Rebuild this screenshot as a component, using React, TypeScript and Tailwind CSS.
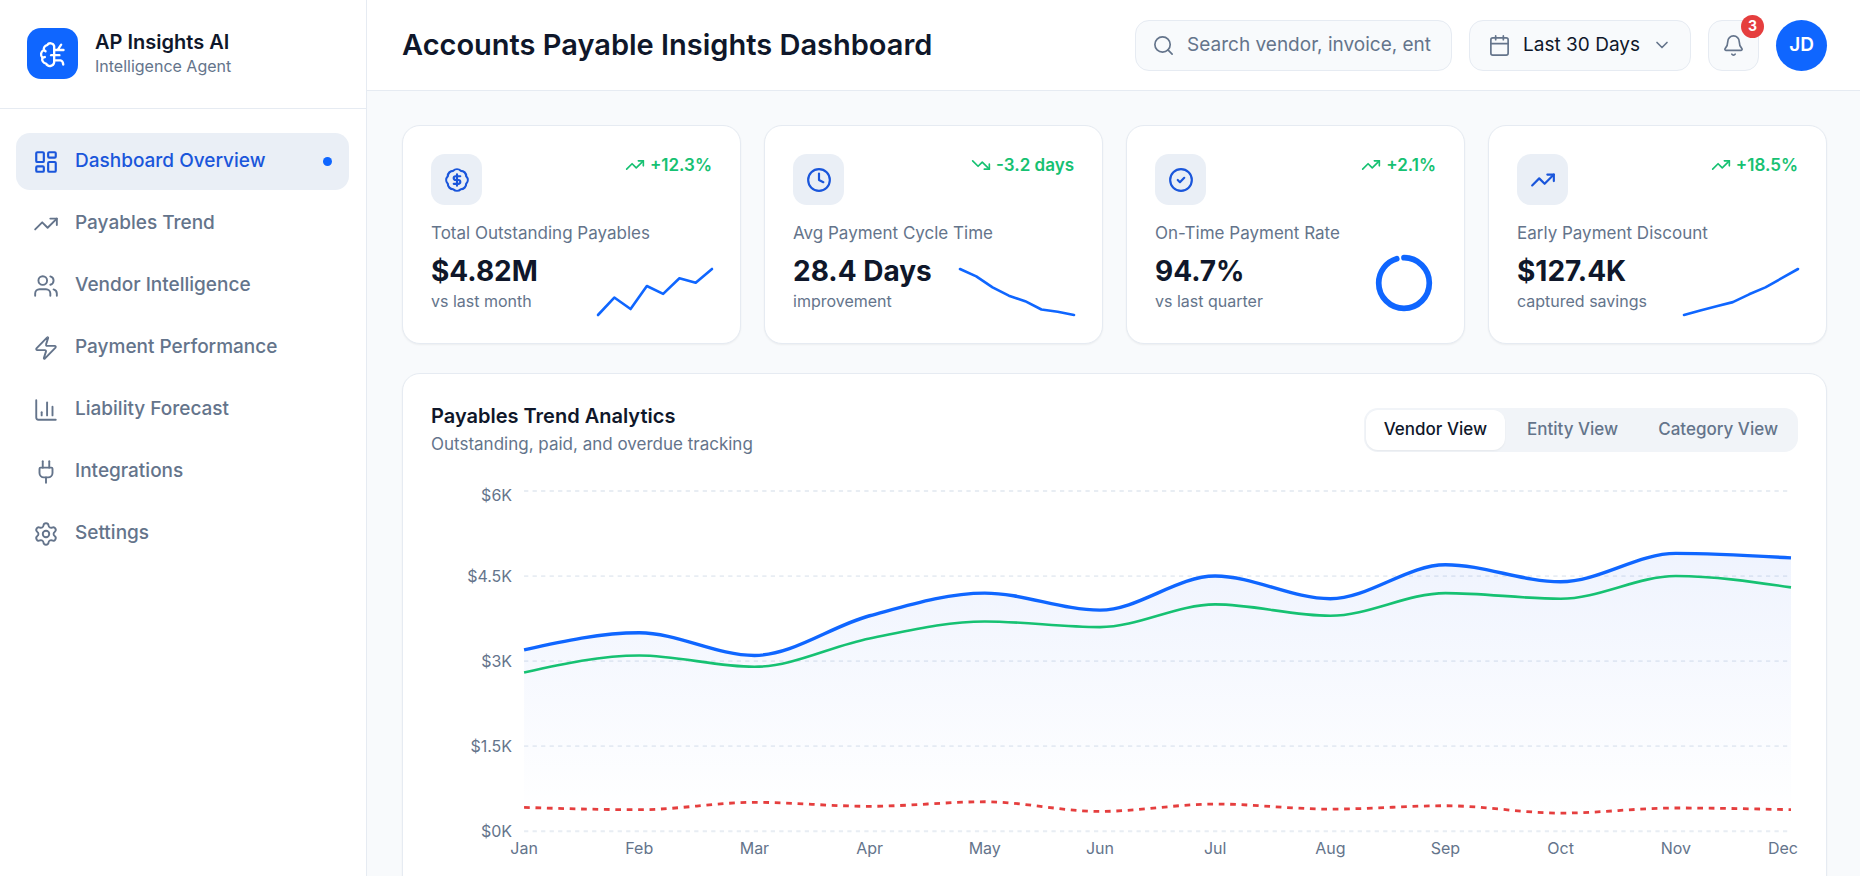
import { useState } from 'react';
import type { ComponentType } from 'react';
import {
  Bell,
  Calendar,
  ChartColumn,
  ChevronDown,
  CircleCheck,
  Clock,
  LayoutDashboard,
  Plug,
  Search,
  Settings,
  TrendingDown,
  TrendingUp,
  Users,
  Zap,
} from 'lucide-react';

interface IconProps {
  size?: number;
  strokeWidth?: number;
}

type IconType = ComponentType<IconProps>;

interface NavItem {
  label: string;
  icon: IconType;
}

interface Metric {
  label: string;
  value: string;
  note: string;
  change: string;
  down?: boolean;
  icon: IconType;
  spark?: number[];
  percent?: number;
}

function BrainIcon({ size = 24 }: IconProps) {
  return (
    <svg width={size} height={size} viewBox="0 0 24 24" fill="none" stroke="currentColor" strokeWidth="2" strokeLinecap="round" strokeLinejoin="round" aria-hidden="true">
      <path d="M13 5.2A3.3 3.3 0 0 0 7 4.4 3.4 3.4 0 0 0 4.2 8.6 4 4 0 0 0 3 15.2 3.7 3.7 0 0 0 6 20.2 3.7 3.7 0 0 0 13 19.2Z" />
      <path d="M4.2 8.6 5.6 9.6M3 15.2 5 14.6" />
      <path d="M13 8.6H21M16 8.4 19 4M13 13H17.5M13 17.4H18.4Q20.4 17.6 20.8 21" />
      <path d="M10.4 13H13" />
    </svg>
  );
}

function DollarBadgeIcon({ size = 24 }: IconProps) {
  return (
    <svg width={size} height={size} viewBox="0 0 24 24" fill="none" stroke="currentColor" strokeWidth="2" strokeLinecap="round" strokeLinejoin="round" aria-hidden="true">
      <path d="M8.5 3.5A5 5 0 0 1 15.5 3.5 5 5 0 0 1 20.5 8.5 5 5 0 0 1 20.5 15.5 5 5 0 0 1 15.5 20.5 5 5 0 0 1 8.5 20.5 5 5 0 0 1 3.5 15.5 5 5 0 0 1 3.5 8.5 5 5 0 0 1 8.5 3.5Z" />
      <path d="M15 8.5H10.7a1.75 1.75 0 0 0 0 3.5h2.6a1.75 1.75 0 0 1 0 3.5H9M12 6.8v10.4" />
    </svg>
  );
}

const navItems: NavItem[] = [
  { label: 'Dashboard Overview', icon: LayoutDashboard },
  { label: 'Payables Trend', icon: TrendingUp },
  { label: 'Vendor Intelligence', icon: Users },
  { label: 'Payment Performance', icon: Zap },
  { label: 'Liability Forecast', icon: ChartColumn },
  { label: 'Integrations', icon: Plug },
  { label: 'Settings', icon: Settings },
];

const metrics: Metric[] = [
  {
    label: 'Total Outstanding Payables',
    value: '$4.82M',
    note: 'vs last month',
    change: '+12.3%',
    icon: DollarBadgeIcon,
    spark: [0, 38, 13, 63, 46, 80, 70, 100],
  },
  {
    label: 'Avg Payment Cycle Time',
    value: '28.4 Days',
    note: 'improvement',
    change: '-3.2 days',
    down: true,
    icon: Clock,
    spark: [100, 84, 60, 42, 30, 12, 7, 0],
  },
  {
    label: 'On-Time Payment Rate',
    value: '94.7%',
    note: 'vs last quarter',
    change: '+2.1%',
    icon: CircleCheck,
    percent: 94.7,
  },
  {
    label: 'Early Payment Discount',
    value: '$127.4K',
    note: 'captured savings',
    change: '+18.5%',
    icon: TrendingUp,
    spark: [0, 10, 19, 28, 45, 60, 80, 100],
  },
];

const months = ['Jan', 'Feb', 'Mar', 'Apr', 'May', 'Jun', 'Jul', 'Aug', 'Sep', 'Oct', 'Nov', 'Dec'];
const outstanding = [3200, 3500, 3100, 3800, 4200, 3900, 4500, 4100, 4700, 4400, 4900, 4820];
const paid = [2800, 3100, 2900, 3400, 3700, 3600, 4000, 3800, 4200, 4100, 4500, 4300];
const overdue = [420, 380, 510, 440, 520, 350, 480, 390, 450, 320, 410, 380];
const views = ['Vendor View', 'Entity View', 'Category View'];

// Chart geometry, in viewBox units
const CHART = { width: 1366, height: 412, left: 93, right: 1359, top: 12, bottom: 352, max: 6000 };

const xAt = (i: number) => CHART.left + ((CHART.right - CHART.left) * i) / (months.length - 1);
const yAt = (v: number) => CHART.bottom - ((CHART.bottom - CHART.top) * v) / CHART.max;

// Monotone cubic interpolation, so the curve never overshoots a point
function curve(values: number[]) {
  const pts = values.map((v, i) => ({ x: xAt(i), y: yAt(v) }));
  const slopes = pts.slice(1).map((p, i) => (p.y - pts[i].y) / (p.x - pts[i].x));
  const tangents = pts.map((_, i) => {
    if (i === 0 || i === pts.length - 1) return 0;
    const a = slopes[i - 1];
    const b = slopes[i];
    if (a * b <= 0) return 0;
    return Math.sign(a) * 2 * Math.min(Math.abs(a), Math.abs(b), 0.25 * Math.abs(a + b));
  });
  const last = pts.length - 1;
  tangents[0] = (3 * slopes[0] - tangents[1]) / 2;
  tangents[last] = (3 * slopes[last - 1] - tangents[last - 1]) / 2;

  let d = `M${pts[0].x},${pts[0].y}`;
  for (let i = 1; i < pts.length; i++) {
    const h = (pts[i].x - pts[i - 1].x) / 3;
    d += `C${pts[i - 1].x + h},${pts[i - 1].y + h * tangents[i - 1]},${pts[i].x - h},${pts[i].y - h * tangents[i]},${pts[i].x},${pts[i].y}`;
  }
  return d;
}

function Sparkline({ values }: { values: number[] }) {
  const points = values
    .map((v, i) => `${(114 * i) / (values.length - 1)},${50 - (46 * v) / 100}`)
    .join(' ');

  return (
    <svg className="h-[50px] w-[114px] shrink-0 overflow-visible" viewBox="0 0 114 50" aria-hidden="true">
      <polyline points={points} fill="none" stroke="#0f66ff" strokeWidth="2.6" strokeLinecap="round" strokeLinejoin="round" />
    </svg>
  );
}

function Ring({ percent }: { percent: number }) {
  const length = 2 * Math.PI * 25.3;

  return (
    <svg className="size-16 shrink-0" viewBox="0 0 64 64" aria-hidden="true">
      <circle
        cx="32"
        cy="32"
        r="25.3"
        fill="none"
        stroke="#0f66ff"
        strokeWidth="5.7"
        strokeLinecap="round"
        strokeDasharray={`${(length * percent) / 100} ${length}`}
        transform="rotate(-90 32 32)"
      />
    </svg>
  );
}

function MetricCard({ metric }: { metric: Metric }) {
  const Icon = metric.icon;
  const ChangeIcon = metric.down ? TrendingDown : TrendingUp;

  return (
    <section className="rounded-[18px] border border-[#e6ebf2] bg-white p-7 shadow-xs">
      <div className="flex items-start justify-between">
        <div className="flex size-[51px] items-center justify-center rounded-[14px] bg-[#eaeff6] text-[#1a56db]">
          <Icon size={26} />
        </div>
        <div className="flex items-center gap-[5px] text-[17px] leading-[22px] font-semibold text-[#16c172]">
          <ChangeIcon size={20} />
          {metric.change}
        </div>
      </div>
      <h2 className="mt-4 text-[17px] leading-6 text-[#64748b]">{metric.label}</h2>
      <div className="flex items-start justify-between">
        <div>
          <p className="mt-2 text-[28px] leading-9 font-bold text-[#0f172a]">{metric.value}</p>
          <p className="mt-0.5 text-base leading-5 text-[#64748b]">{metric.note}</p>
        </div>
        <div className="flex h-[70px] items-end">
          {metric.spark && <Sparkline values={metric.spark} />}
          {metric.percent && <Ring percent={metric.percent} />}
        </div>
      </div>
    </section>
  );
}

function TrendChart() {
  const line = curve(outstanding);
  const area = `${line}L${CHART.right},${CHART.bottom}L${CHART.left},${CHART.bottom}Z`;

  return (
    <svg className="mt-[21px] block w-full font-[Inter,sans-serif]" viewBox={`0 0 ${CHART.width} ${CHART.height}`} role="img" aria-label="Payables by month">
      <defs>
        <linearGradient id="outstanding" x1="0" y1="0" x2="0" y2="1">
          <stop offset="0%" stopColor="#1d5cf0" stopOpacity="0.07" />
          <stop offset="95%" stopColor="#1d5cf0" stopOpacity="0" />
        </linearGradient>
      </defs>

      {[6000, 4500, 3000, 1500, 0].map((v) => (
        <g key={v}>
          <line x1={CHART.left} x2={CHART.right} y1={yAt(v)} y2={yAt(v)} stroke="#e8edf3" strokeWidth="1.8" strokeDasharray="4.25 4.25" />
          <text x="81" y={v === 6000 ? yAt(v) + 10 : yAt(v) + 6} textAnchor="end" fontSize="16" fill="#64748b">
            ${v / 1000}K
          </text>
        </g>
      ))}

      <path d={area} fill="url(#outstanding)" />
      <path d={line} fill="none" stroke="#0f66ff" strokeWidth="3.4" />
      <path d={curve(paid)} fill="none" stroke="#16c172" strokeWidth="2.6" />
      <path d={curve(overdue)} fill="none" stroke="#e53e3e" strokeWidth="2.8" strokeDasharray="5.7 5.7" />

      {months.map((month, i) => {
        const isLast = i === months.length - 1;
        return (
          <text
            key={month}
            x={isLast ? CHART.width : xAt(i)}
            y={CHART.bottom + 23}
            textAnchor={isLast ? 'end' : 'middle'}
            fontSize="16"
            fill="#64748b"
          >
            {month}
          </text>
        );
      })}
    </svg>
  );
}

export default function App() {
  const [activeNav, setActiveNav] = useState('Dashboard Overview');
  const [activeView, setActiveView] = useState('Vendor View');

  return (
    <div className="flex h-screen overflow-hidden bg-[#f8fafc] font-[Inter,sans-serif] text-[#0f172a]">
      <aside className="w-[367px] shrink-0 border-r border-[#e6ebf2] bg-white">
        <div className="flex items-start gap-[17px] border-b border-[#e6ebf2] px-[27px] pt-7 pb-[29px]">
          <div className="flex size-[51px] items-center justify-center rounded-[14px] bg-[#0f66ff] text-white">
            <BrainIcon size={28} />
          </div>
          <div>
            <p className="text-xl leading-7 font-semibold">AP Insights AI</p>
            <p className="text-base leading-5 text-[#64748b]">Intelligence Agent</p>
          </div>
        </div>
        <nav className="flex flex-col gap-[5px] pt-6 pr-[17px] pl-4">
          {navItems.map(({ label, icon: Icon }) => {
            const active = label === activeNav;
            return (
              <button
                key={label}
                onClick={() => setActiveNav(label)}
                className={`flex h-[57px] items-center gap-4 rounded-[14px] px-[17px] text-[19px] font-medium ${
                  active ? 'bg-[#eaeff6] text-[#1a56db]' : 'text-[#64748b]'
                }`}
              >
                <Icon size={26} strokeWidth={active ? 2 : 1.75} />
                {label}
                {active && <span className="ml-auto size-[9px] rounded-full bg-[#0f66ff]" />}
              </button>
            );
          })}
        </nav>
      </aside>

      <div className="min-w-0 flex-1">
        <header className="flex h-[91px] items-center justify-between border-b border-[#e6ebf2] bg-white pr-[33px] pl-[35px]">
          <h1 className="text-[29px] font-semibold">Accounts Payable Insights Dashboard</h1>
          <div className="flex items-center gap-[17px]">
            <label className="flex h-[51px] w-[317px] items-center gap-3 rounded-[14px] border border-[#e6ebf2] bg-[#f8fafc] pr-5 pl-4">
              <Search size={23} strokeWidth={1.75} className="shrink-0 text-[#64748b]" />
              <input
                type="text"
                aria-label="Search"
                placeholder="Search vendor, invoice, entity..."
                className="min-w-0 flex-1 text-[19px] placeholder:text-[#64748b] focus:outline-none"
              />
            </label>
            <button className="flex h-[51px] items-center gap-3 rounded-[14px] border border-[#e6ebf2] bg-[#f8fafc] px-[18px] text-[19px]">
              <Calendar size={23} strokeWidth={1.75} className="text-[#64748b]" />
              Last 30 Days
              <ChevronDown size={20} className="text-[#64748b]" />
            </button>
            <button
              aria-label="Notifications"
              className="relative flex size-[51px] items-center justify-center rounded-[14px] border border-[#e6ebf2] bg-[#f8fafc]"
            >
              <Bell size={23} strokeWidth={1.75} className="text-[#64748b]" />
              <span className="absolute -top-1.5 -right-1.5 flex size-[23px] items-center justify-center rounded-full bg-[#e53e3e] text-sm font-bold text-white">
                3
              </span>
            </button>
            <button className="size-[51px] rounded-full bg-[#0f66ff] text-[19px] font-semibold text-white">JD</button>
          </div>
        </header>

        <main className="pt-[34px] pr-[33px] pl-[35px]">
          <div className="grid grid-cols-4 gap-[23px]">
            {metrics.map((metric) => (
              <MetricCard key={metric.label} metric={metric} />
            ))}
          </div>

          <section className="mt-[29px] rounded-[18px] border border-[#e6ebf2] bg-white p-7 shadow-xs">
            <div className="flex items-center justify-between">
              <div>
                <h2 className="text-xl leading-7 font-semibold">Payables Trend Analytics</h2>
                <p className="text-[17px] leading-7 text-[#64748b]">Outstanding, paid, and overdue tracking</p>
              </div>
              <div className="flex gap-1 rounded-[14px] bg-[#f1f4f8] p-0.5">
                {views.map((view) => (
                  <button
                    key={view}
                    onClick={() => setActiveView(view)}
                    className={`h-10 rounded-xl px-[18px] text-[17px] font-medium ${
                      view === activeView ? 'bg-white text-[#0f172a] shadow-xs' : 'text-[#64748b]'
                    }`}
                  >
                    {view}
                  </button>
                ))}
              </div>
            </div>
            <TrendChart />
          </section>
        </main>
      </div>
    </div>
  );
}
